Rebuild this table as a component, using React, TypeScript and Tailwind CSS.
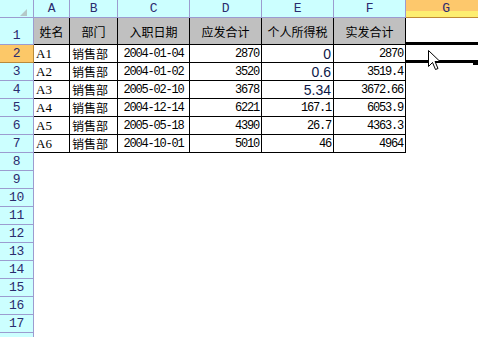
import React from "react";

// Column widths (px, right border included): A..F, G runs past the window
const COLS = ["A", "B", "C", "D", "E", "F"];

const rows = [
	{ name: "A1", dept: "销售部", date: "2004-01-04", gross: "2870", tax: "0", taxSans: true, net: "2870" },
	{ name: "A2", dept: "销售部", date: "2004-01-02", gross: "3520", tax: "0.6", taxSans: true, net: "3519.4" },
	{ name: "A3", dept: "销售部", date: "2005-02-10", gross: "3678", tax: "5.34", taxSans: true, net: "3672.66" },
	{ name: "A4", dept: "销售部", date: "2004-12-14", gross: "6221", tax: "167.1", taxSans: false, net: "6053.9" },
	{ name: "A5", dept: "销售部", date: "2005-05-18", gross: "4390", tax: "26.7", taxSans: false, net: "4363.3" },
	{ name: "A6", dept: "销售部", date: "2004-10-01", gross: "5010", tax: "46", taxSans: false, net: "4964" },
];

const hdrFont =
	"font-['Liberation_Mono',monospace] text-[13px] tracking-[-0.4px] text-[#2b2b6e]";
const numFont =
	"font-['Liberation_Mono',monospace] text-[12px] tracking-[-1.2px] text-black";
const cjkFont = "font-['Noto_Sans_CJK_SC',sans-serif] text-[12px] text-black";

const RowHeader: React.FC<{ n?: number; active?: boolean }> = ({ n, active }) => (
	<div
		className={
			"flex h-full w-[34px] shrink-0 items-end justify-center border-r border-b leading-[16px] " +
			hdrFont +
			(active
				? " border-[#b8893a] bg-[#fcc868]"
				: " border-[#9c9cd0] bg-[#ccffff]")
		}>
		{n}
	</div>
);

const Cell: React.FC<{
	w: string;
	align?: "left" | "center" | "right";
	className?: string;
	children?: React.ReactNode;
}> = ({ w, align = "left", className = "", children }) => (
	<div
		className={
			"flex h-full shrink-0 items-center overflow-hidden whitespace-pre border-r border-b border-black pt-[1px] " +
			w +
			(align === "left"
				? " justify-start pl-[2px]"
				: align === "center"
					? " justify-center"
					: " justify-end pr-[2px]") +
			" " +
			className
		}>
		{children}
	</div>
);

const Cursor = () => (
	<svg
		className="absolute left-[428px] top-[50px]"
		width="13"
		height="21"
		viewBox="0 0 13 21">
		<path
			d="M0.5 0.5 L0.5 16.5 L4.5 12.5 L7.5 19.5 L10 18.5 L7 11.5 L12 11.5 Z"
			fill="#fff"
			stroke="#000"
			strokeWidth="1"
		/>
	</svg>
);

export default function App() {
	const widths = ["w-[36px]", "w-[48px]", "w-[72px]", "w-[72px]", "w-[72px]", "w-[72px]"];
	const titles = ["姓名", "部门", "入职日期", "应发合计", "个人所得税", "实发合计"];
	return (
		<div className="relative h-[337px] w-[478px] overflow-hidden bg-white">
			{/* column headers */}
			<div className="flex h-[18px]">
				<div className="relative h-full w-[34px] shrink-0 border-r border-b border-[#9c9cd0] bg-[#ccffff]">
					<svg className="absolute left-[20px] top-[9px]" width="7" height="7" viewBox="0 0 7 7">
						<path d="M7 0 L7 7 L0 7 Z" fill="#b4c8c8" />
					</svg>
				</div>
				{COLS.map((c, i) => (
					<div
						key={c}
						className={
							"flex h-full shrink-0 items-center justify-center border-r border-b border-[#9c9cd0] bg-[#ccffff] leading-none " +
							widths[i] +
							" " +
							hdrFont
						}>
						{c}
					</div>
				))}
				<div
					className={
						"flex h-full w-[80px] shrink-0 flex-col border-b border-[#c08a34] " + hdrFont
					}>
					<div className="flex h-[11px] items-end justify-center bg-[#fdc86c] leading-none">
						<span className="translate-y-[4px]">G</span>
					</div>
					<div className="h-[6px] bg-[#fdee70]" />
				</div>
			</div>

			{/* row 1: titles */}
			<div className="flex h-[27px]">
				<RowHeader n={1} />
				{titles.map((t, i) => (
					<Cell key={t} w={widths[i]} align="center" className={"bg-[#c0c0c0] " + cjkFont}>
						{t}
					</Cell>
				))}
				<div className="h-full w-[80px] shrink-0" />
			</div>

			{/* data rows */}
			{rows.map((r, i) => (
				<div key={r.name} className="flex h-[18px]">
					<RowHeader n={i + 2} active={i === 0} />
					<Cell w={widths[0]} className="font-['Liberation_Serif',serif] text-[13px] text-black">
						{r.name}
					</Cell>
					<Cell w={widths[1]} className={cjkFont}>
						{r.dept}
					</Cell>
					<Cell w={widths[2]} align="center" className={numFont}>
						{r.date}
					</Cell>
					<Cell w={widths[3]} align="right" className={numFont}>
						{r.gross}
					</Cell>
					<Cell
						w={widths[4]}
						align="right"
						className={
							r.taxSans
								? "font-['Liberation_Sans',sans-serif] text-[14px] text-[#0c1848]"
								: numFont
						}>
						{r.tax}
					</Cell>
					<Cell w={widths[5]} align="right" className={numFont}>
						{r.net}
					</Cell>
					<div className="relative h-full w-[80px] shrink-0">
						{i === 0 && (
							<div className="absolute -left-[1px] -top-[3px] bottom-0 right-[-10px] border-y-[3px] border-l border-black" />
						)}
					</div>
				</div>
			))}

			{/* empty rows */}
			{Array.from({ length: 10 }, (_, k) => (
				<div key={k} className="flex h-[18px]">
					<RowHeader n={k + 8} />
					<div className="flex-1" />
				</div>
			))}
			<div className="flex h-[18px]">
				<RowHeader />
				<div className="flex-1" />
			</div>

			{/* fill handle */}
			<div className="absolute left-[473px] top-[60px] h-[5px] w-[5px] bg-black" />
			<Cursor />
		</div>
	);
}
